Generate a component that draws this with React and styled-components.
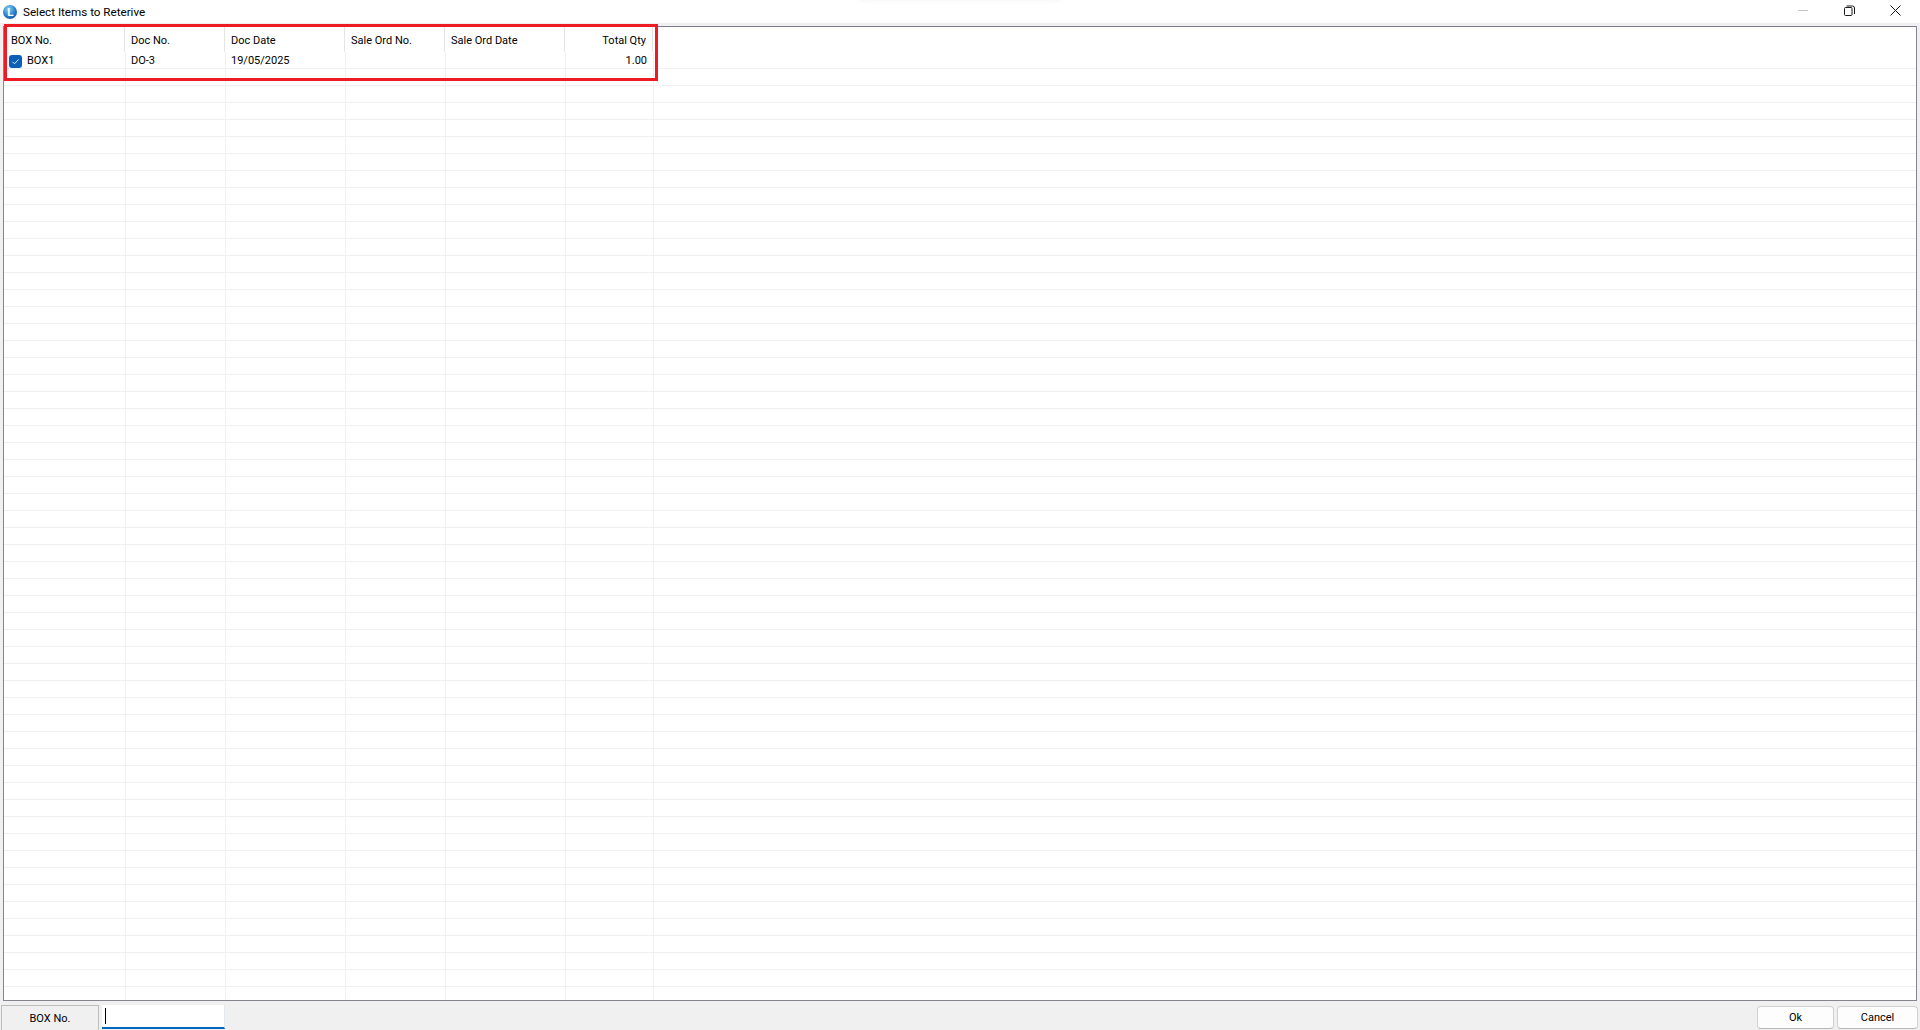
import React from "react";
import styled, { createGlobalStyle } from "styled-components";

const GlobalStyle = createGlobalStyle`
  html, body {
    margin: 0;
    padding: 0;
    height: 100%;
    overflow: hidden;
  }
  body {
    background: #f0f0f0;
    color: #000;
    font-family: Roboto, "Open Sans", "Liberation Sans", sans-serif;
    font-size: 11px;
  }
`;

const COLUMNS = [
  { title: "BOX No.", width: 122 },
  { title: "Doc No.", width: 100 },
  { title: "Doc Date", width: 120 },
  { title: "Sale Ord No.", width: 100 },
  { title: "Sale Ord Date", width: 120 },
  { title: "Total Qty", width: 88, right: true },
];

const EMPTY_ROWS = 55;

const Window = styled.div`
  position: relative;
  display: flex;
  flex-direction: column;
  width: 1920px;
  height: 1030px;
  overflow: hidden;
  background: #f0f0f0;
`;

const TitleBar = styled.header`
  position: relative;
  display: flex;
  align-items: center;
  justify-content: space-between;
  flex: none;
  height: 23px;
  padding: 0 2px 0 3px;
  background: #fff;
`;

const TitleLeft = styled.div`
  display: flex;
  align-items: center;
  gap: 6px;
`;

const TitleText = styled.span`
  padding-top: 2px;
  font-size: 11.65px;
  line-height: 21px;
  white-space: nowrap;
`;

const TopShade = styled.div`
  position: absolute;
  top: -4px;
  left: 860px;
  width: 200px;
  height: 5px;
  background: #f4f4f4;
  filter: blur(2px);
`;

const Controls = styled.div`
  display: flex;
  align-items: flex-start;
  height: 23px;
`;

const ControlButton = styled.div`
  display: flex;
  align-items: flex-start;
  justify-content: center;
  width: 46px;
  padding-top: 5px;
  color: ${(p) => (p.$muted ? "#c6c6c6" : "#1a1a1a")};
`;

const GridArea = styled.div`
  flex: none;
  height: 978px;
  box-sizing: border-box;
  padding: 3px 3px 0;
`;

const Grid = styled.section`
  box-sizing: border-box;
  height: 975px;
  overflow: hidden;
  background: #fff;
  border: 1px solid #85858f;
  border-top-color: #7c7c8a;
`;

const HeaderRow = styled.div`
  display: flex;
  height: 25px;
`;

const HeaderCell = styled.div`
  box-sizing: border-box;
  flex: none;
  width: ${(p) => p.$width}px;
  padding: 0 ${(p) => (p.$right ? 6 : 0)}px 0 ${(p) => (p.$first ? 7 : 6)}px;
  border-right: 1px solid #e5e5e5;
  line-height: 27px;
  text-align: ${(p) => (p.$right ? "right" : "left")};
  white-space: nowrap;
`;

const Row = styled.div`
  display: flex;
  box-sizing: border-box;
  height: 17px;
  border-bottom: 1px solid #f0f0f0;
`;

const Cell = styled.div`
  display: flex;
  align-items: center;
  justify-content: ${(p) => (p.$right ? "flex-end" : "flex-start")};
  box-sizing: border-box;
  flex: none;
  width: ${(p) => p.$width}px;
  padding: 2px ${(p) => (p.$right ? 6 : 0)}px 0 5px;
  border-right: 1px solid #f0f0f0;
  line-height: 14px;
  white-space: nowrap;
`;

const CheckBox = styled.span`
  display: flex;
  align-items: center;
  justify-content: center;
  flex: none;
  width: 13px;
  height: 13px;
  margin-right: 5px;
  border-radius: 3px;
  background: #0a5fb8;
`;

const RedMark = styled.div`
  position: absolute;
  top: 24px;
  left: 4px;
  box-sizing: border-box;
  width: 654px;
  height: 57px;
  border: 3px solid #ed1c24;
  pointer-events: none;
`;

const Footer = styled.footer`
  display: flex;
  align-items: flex-end;
  flex: none;
  box-sizing: border-box;
  height: 29px;
  padding: 0 2px 0 1px;
`;

const FieldLabel = styled.div`
  box-sizing: border-box;
  width: 98px;
  height: 25px;
  border: 1px solid #bdbdbd;
  border-bottom: 0;
  text-align: center;
  line-height: 26px;
  background: #f0f0f0;
`;

const SearchInput = styled.div`
  box-sizing: border-box;
  display: flex;
  align-items: center;
  width: 123px;
  height: 24px;
  margin-left: 3px;
  margin-bottom: 1px;
  padding: 0 0 0 3px;
  background: #fff;
  border-right: 1px solid #e3e7ee;
  border-bottom: 2px solid #0067c0;
`;

const Caret = styled.span`
  display: block;
  width: 1px;
  height: 16px;
  background: #000;
`;

const ButtonRow = styled.div`
  display: flex;
  gap: 3px;
  margin-left: auto;
  margin-bottom: 1px;
`;

const Button = styled.button`
  box-sizing: border-box;
  width: ${(p) => p.$width}px;
  height: 23px;
  padding: 0;
  border: 1px solid #d0d0d0;
  border-bottom-color: #b8b8b8;
  border-radius: 4px;
  background: #fdfdfd;
  color: #000;
  font: inherit;
`;

const AppIcon = () => (
  <svg width="14" height="14" viewBox="0 0 14 14">
    <defs>
      <radialGradient id="appGlobe" cx="40%" cy="30%" r="80%">
        <stop offset="0%" stopColor="#8fd0f5" />
        <stop offset="55%" stopColor="#2e86cf" />
        <stop offset="100%" stopColor="#0f4f9c" />
      </radialGradient>
    </defs>
    <circle cx="7" cy="7" r="7" fill="url(#appGlobe)" />
    <text x="4.2" y="11" fill="#fff" fontSize="10.5" fontWeight="700" fontFamily="Liberation Sans, sans-serif">
      L
    </text>
  </svg>
);

const MinimizeIcon = () => (
  <svg width="10" height="10" viewBox="0 0 10 10">
    <path d="M0 5.5h10" stroke="currentColor" strokeWidth="1" fill="none" />
  </svg>
);

const RestoreIcon = () => (
  <svg width="11" height="11" viewBox="0 0 11 11" fill="none" stroke="currentColor" strokeWidth="1">
    <rect x="0.5" y="2.5" width="7.5" height="8" rx="1" />
    <path d="M2.5 1h6a2 2 0 0 1 2 2v6" />
  </svg>
);

const CloseIcon = () => (
  <svg width="11" height="11" viewBox="0 0 11 11" fill="none" stroke="currentColor" strokeWidth="1">
    <path d="M0.5 0.5l10 10M10.5 0.5l-10 10" />
  </svg>
);

const CheckIcon = () => (
  <svg width="9" height="9" viewBox="0 0 9 9" fill="none" stroke="#dbe9f7" strokeWidth="1">
    <path d="M1.5 4.8l2 2 4-4.4" />
  </svg>
);

export default function App() {
  const data = ["BOX1", "DO-3", "19/05/2025", "", "", "1.00"];

  return (
    <Window>
      <GlobalStyle />
      <TitleBar>
        <TopShade />
        <TitleLeft>
          <AppIcon />
          <TitleText>Select Items to Reterive</TitleText>
        </TitleLeft>
        <Controls>
          <ControlButton $muted>
            <MinimizeIcon />
          </ControlButton>
          <ControlButton>
            <RestoreIcon />
          </ControlButton>
          <ControlButton>
            <CloseIcon />
          </ControlButton>
        </Controls>
      </TitleBar>

      <GridArea>
        <Grid>
          <HeaderRow>
            {COLUMNS.map((col, i) => (
              <HeaderCell key={col.title} $width={col.width - (i === 0 ? 1 : 0)} $right={col.right} $first={i === 0}>
                {col.title}
              </HeaderCell>
            ))}
          </HeaderRow>
          <Row>
            {COLUMNS.map((col, i) => (
              <Cell key={col.title} $width={col.width} $right={col.right}>
                {i === 0 && (
                  <CheckBox>
                    <CheckIcon />
                  </CheckBox>
                )}
                {data[i]}
              </Cell>
            ))}
          </Row>
          {Array.from({ length: EMPTY_ROWS }).map((_, r) => (
            <Row key={r}>
              {COLUMNS.map((col) => (
                <Cell key={col.title} $width={col.width} />
              ))}
            </Row>
          ))}
        </Grid>
      </GridArea>

      <Footer>
        <FieldLabel>BOX No.</FieldLabel>
        <SearchInput>
          <Caret />
        </SearchInput>
        <ButtonRow>
          <Button $width={77}>Ok</Button>
          <Button $width={81}>Cancel</Button>
        </ButtonRow>
      </Footer>

      <RedMark />
    </Window>
  );
}
